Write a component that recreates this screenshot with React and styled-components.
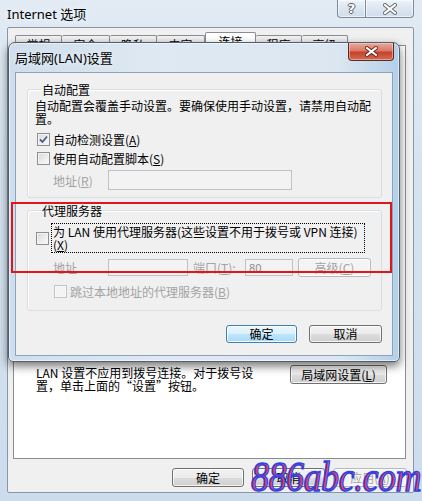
import React from "react"
import styled, { createGlobalStyle } from "styled-components"

const GlobalStyle = createGlobalStyle`
  html, body {
    margin: 0;
    padding: 0;
  }
  body {
    width: 422px;
    height: 501px;
    overflow: hidden;
    font-family: "Noto Sans CJK SC", "Noto Sans", sans-serif;
    font-size: 12px;
    color: #000;
  }
`

const Screen = styled.div`
  position: relative;
  width: 422px;
  height: 501px;
  overflow: hidden;
`

/* ---------- outer "Internet 选项" window ---------- */

const Window = styled.div`
  box-sizing: border-box;
  height: 501px;
  padding: 0 8px 8px 7px;
  display: flex;
  flex-direction: column;
  background: linear-gradient(180deg, #e2ebf4 0%, #d6e3ef 35%, #cddced 100%);
`

const TitleBar = styled.div`
  height: 27px;
  display: flex;
  justify-content: space-between;
  align-items: flex-start;
  flex-shrink: 0;
`

const WindowTitle = styled.div`
  padding-top: 6px;
  font-family: "Noto Sans", "Noto Sans CJK SC", sans-serif;
  font-size: 13px;
  line-height: 16px;
  text-shadow: 0 0 6px rgba(255, 255, 255, 0.9);
`

const Captions = styled.div`
  display: flex;
`

const CaptionButton = styled.div`
  box-sizing: border-box;
  width: ${(p) => p.$w}px;
  height: 18px;
  display: flex;
  align-items: center;
  justify-content: center;
  border: 1px solid #7d8a99;
  border-top: none;
  background: linear-gradient(180deg, #edf3f9 0%, #dbe6f1 50%, #cfdcea 100%);
  box-shadow: inset 0 0 0 1px rgba(255, 255, 255, 0.6);
  &:first-child {
    border-radius: 0 0 0 4px;
    border-right: none;
  }
  &:last-child {
    border-radius: 0 0 4px 0;
  }
`

const HelpGlyph = styled.span`
  font-family: "DejaVu Sans", sans-serif;
  font-weight: bold;
  font-size: 13px;
  line-height: 1;
  color: #fff;
  text-shadow: 1px 0 #5c5c5c, -1px 0 #5c5c5c, 0 1px #5c5c5c, 0 -1px #5c5c5c;
`

const Client = styled.div`
  flex: 1;
  display: flex;
  flex-direction: column;
  background: #f0f0f0;
  border: 1px solid #8797a8;
  border-radius: 2px;
  padding: 5px 7px 5px 5px;
`

const TabRow = styled.div`
  display: flex;
  align-items: flex-end;
  height: 12px;
  padding-left: 2px;
  position: relative;
  z-index: 1;
`

const Tab = styled.div`
  box-sizing: border-box;
  width: ${(p) => p.$w}px;
  height: ${(p) => (p.$active ? 14 : 10)}px;
  margin-bottom: ${(p) => (p.$active ? -1 : 0)}px;
  border: 1px solid #898c95;
  border-bottom: none;
  border-left-width: ${(p) => (p.$first || p.$active ? 1 : 0)}px;
  border-radius: 2px 2px 0 0;
  background: ${(p) =>
    p.$active ? "#fff" : "linear-gradient(180deg, #f3f3f3, #e3e3e3)"};
  text-align: center;
  padding-top: 2px;
  font-size: 12px;
  line-height: 13px;
  overflow: hidden;
`

const Panel = styled.div`
  flex: 1;
  display: flex;
  flex-direction: column;
  justify-content: flex-end;
  background: #fff;
  border: 1px solid #898c95;
  padding: 0 18px 66px 22px;
`

const LanRow = styled.div`
  display: flex;
  justify-content: space-between;
  align-items: flex-start;
`

const LanNote = styled.div`
  margin-top: 2px;
  line-height: 12.5px;
`

const ButtonRow = styled.div`
  display: flex;
  justify-content: flex-end;
  gap: ${(p) => p.$gap || 8}px;
  margin-right: ${(p) => p.$right || 0}px;
  flex-shrink: 0;
`

const DialogButtons = styled(ButtonRow)`
  margin-top: auto;
`

const OuterButtons = styled(ButtonRow)`
  padding-top: 9px;
`

const Button = styled.button`
  box-sizing: border-box;
  width: ${(p) => p.$w}px;
  height: ${(p) => p.$h || 19}px;
  padding: 0;
  margin: 0;
  font-family: "Noto Sans CJK SC", sans-serif;
  font-size: 12px;
  line-height: 1;
  color: ${(p) => (p.$disabled ? "#a3a3a3" : "#000")};
  border: 1px solid
    ${(p) => (p.$disabled ? "#b6babe" : p.$default ? "#3c7fb1" : "#707070")};
  border-radius: 3px;
  background: ${(p) =>
    p.$disabled
      ? "#f4f4f4"
      : p.$default
      ? "linear-gradient(180deg, #eaf6fd 0%, #d9f0fc 50%, #bee6fd 51%, #a7d9f5 100%)"
      : "linear-gradient(180deg, #f2f2f2 0%, #ebebeb 50%, #dddddd 51%, #cfcfcf 100%)"};
  box-shadow: inset 0 0 0 1px
    ${(p) => (p.$default ? "rgba(255,255,255,0.95)" : "rgba(255,255,255,0.75)")};
`

/* ---------- LAN settings dialog ---------- */

const Dialog = styled.div`
  position: absolute;
  left: 8px;
  top: 42px;
  width: 392px;
  height: 320px;
  box-sizing: border-box;
  z-index: 2;
  display: flex;
  flex-direction: column;
  padding: 0 6px 5px 6px;
  border: 1px solid #4f5f70;
  border-radius: 7px 7px 5px 5px;
  background: linear-gradient(90deg, #cfdeec 0%, #dfe9f3 40%, #dbe6f1 85%, #b3cfe9 100%);
  box-shadow: inset 0 0 0 1px rgba(255, 255, 255, 0.55), 0 4px 10px rgba(0, 0, 0, 0.55);
`

const DialogTitleBar = styled.div`
  height: 29px;
  display: flex;
  justify-content: space-between;
  align-items: flex-start;
  flex-shrink: 0;
`

const DialogTitle = styled.div`
  padding-top: 7px;
  font-family: "Noto Sans", "Noto Sans CJK SC", sans-serif;
  font-size: 13px;
  line-height: 16px;
  text-shadow: 0 0 6px rgba(255, 255, 255, 0.9);
`

const CloseButton = styled.div`
  box-sizing: border-box;
  width: 46px;
  height: 18px;
  margin-right: -1px;
  display: flex;
  align-items: center;
  justify-content: center;
  border: 1px solid #5b2a22;
  border-top: none;
  border-radius: 0 0 4px 4px;
  background: linear-gradient(180deg, #e9a99a 0%, #d87a68 45%, #c4432f 55%, #d36a4f 100%);
  box-shadow: inset 0 0 0 1px rgba(255, 220, 210, 0.5);
`

const DialogClient = styled.div`
  flex: 1;
  display: flex;
  flex-direction: column;
  background: #f0f0f0;
  border: 1px solid #8fa3b8;
  padding: 10px 10px 12px 11px;
`

const Group = styled.fieldset`
  margin: ${(p) => p.$top || 0}px 0 0 0;
  padding: 3px 8px ${(p) => p.$bottom || 7}px 7px;
  border: 1px solid #d5dfe5;
  border-radius: 3px;
  box-shadow: inset 1px 1px 0 #fff;
  min-width: 0;
`

const Legend = styled.legend`
  padding: 0 1px;
  margin-left: 6px;
  font-size: 12px;
  line-height: 13px;
`

const GroupPadded = styled(Group)`
  padding-top: 6px;
`

const Desc = styled.div`
  max-width: 340px;
  line-height: 13px;
`

const CheckRow = styled.div`
  display: flex;
  align-items: center;
  gap: 3px;
  height: 13px;
  line-height: 13px;
  margin-top: ${(p) => p.$top || 0}px;
  margin-left: ${(p) => p.$indent || 2}px;
  color: ${(p) => (p.$disabled ? "#a3a3a3" : "#000")};
`

const Box = styled.span`
  box-sizing: border-box;
  width: 13px;
  height: 13px;
  flex-shrink: 0;
  display: flex;
  align-items: center;
  justify-content: center;
  border: 1px solid ${(p) => (p.$disabled ? "#c4c4c4" : "#8e8f8f")};
  background: ${(p) =>
    p.$disabled
      ? "#f4f4f4"
      : "linear-gradient(135deg, #d6d6d6 0%, #e9e9e9 45%, #fbfbfb 100%)"};
  box-shadow: inset 0 0 0 1px ${(p) => (p.$disabled ? "#f7f7f7" : "#f4f4f4")};
`

const FieldRow = styled.div`
  display: flex;
  align-items: center;
  margin-top: ${(p) => p.$top || 0}px;
  margin-left: 18px;
`

const FieldLabel = styled.span`
  width: ${(p) => p.$w}px;
  margin-left: ${(p) => p.$left || 0}px;
  flex-shrink: 0;
  color: #a3a3a3;
  line-height: 13px;
`

const TextInput = styled.div`
  box-sizing: border-box;
  width: ${(p) => p.$w}px;
  height: ${(p) => p.$h || 17}px;
  flex-shrink: 0;
  border: 1px solid #bfc3c8;
  background: #f3f3f3;
  color: #8c8c8c;
  padding: 1px 3px;
  font-family: "Noto Sans", sans-serif;
  font-size: 11px;
  line-height: 13px;
`

const ProxyRow = styled.div`
  display: flex;
  align-items: flex-start;
  gap: 2px;
  margin-left: 1px;
`

const ProxyBox = styled(Box)`
  margin-top: 9px;
`

const FocusLabel = styled.div`
  box-sizing: border-box;
  width: 314px;
  padding: 1px 0 1px 1px;
  border: 1px dotted #000;
  line-height: 13px;
`

const SideButton = styled(Button)`
  margin-left: 5px;
`

/* ---------- overlays ---------- */

const Highlight = styled.div`
  position: absolute;
  left: 11px;
  top: 202px;
  width: 381px;
  height: 71px;
  box-sizing: border-box;
  border: 2px solid #e2141c;
  z-index: 3;
  pointer-events: none;
`

const Watermark = styled.div`
  position: absolute;
  left: 251px;
  top: 460px;
  z-index: 4;
  font-family: "Liberation Serif", serif;
  font-style: italic;
  font-size: 36px;
  line-height: 40px;
  letter-spacing: -0.5px;
  color: #f23848;
  -webkit-text-stroke: 1.3px #2b44e6;
  transform: scaleY(1.15);
  transform-origin: bottom left;
`

const Check = () => (
  <svg width="9" height="9" viewBox="0 0 9 9">
    <path d="M1 4.5 L3.5 7 L8 1.5" fill="none" stroke="#4a5f8f" strokeWidth="1.8" />
  </svg>
)

const CrossGlyph = ({ fill, edge, w = 12, h = 10 }) => (
  <svg width={w + 2} height={h + 2} viewBox={`-1 -1 ${w + 2} ${h + 2}`}>
    <path d={`M1 1 L${w - 1} ${h - 1} M${w - 1} 1 L1 ${h - 1}`} stroke={edge} strokeWidth="4" strokeLinecap="square" />
    <path d={`M1 1 L${w - 1} ${h - 1} M${w - 1} 1 L1 ${h - 1}`} stroke={fill} strokeWidth="2" strokeLinecap="square" />
  </svg>
)

const tabs = [
  { label: "常规", w: 47 },
  { label: "安全", w: 48 },
  { label: "隐私", w: 47 },
  { label: "内容", w: 48 },
  { label: "连接", w: 51, active: true },
  { label: "程序", w: 46 },
  { label: "高级", w: 46 },
]

const LanDialog = () => (
  <Dialog>
    <DialogTitleBar>
      <DialogTitle>局域网(LAN)设置</DialogTitle>
      <CloseButton>
        <CrossGlyph fill="#fff" edge="#6b2419" w={11} h={9} />
      </CloseButton>
    </DialogTitleBar>
    <DialogClient>
      <Group>
        <Legend>自动配置</Legend>
        <Desc>自动配置会覆盖手动设置。要确保使用手动设置，请禁用自动配置。</Desc>
        <CheckRow $top={8}>
          <Box>
            <Check />
          </Box>
          <span>
            自动检测设置(<u>A</u>)
          </span>
        </CheckRow>
        <CheckRow $top={6}>
          <Box />
          <span>
            使用自动配置脚本(<u>S</u>)
          </span>
        </CheckRow>
        <FieldRow $top={5}>
          <FieldLabel $w={55}>
            地址(<u>R</u>)
          </FieldLabel>
          <TextInput $w={184} $h={20} />
        </FieldRow>
      </Group>

      <GroupPadded $top={6} $bottom={12}>
        <Legend>代理服务器</Legend>
        <ProxyRow>
          <ProxyBox />
          <FocusLabel>
            为 LAN 使用代理服务器(这些设置不用于拨号或 VPN 连接)
            <br />
            (<u>X</u>)
          </FocusLabel>
        </ProxyRow>
        <FieldRow $top={5}>
          <FieldLabel $w={55}>地址</FieldLabel>
          <TextInput $w={80} />
          <FieldLabel $w={52} $left={5}>
            端口(<u>T</u>):
          </FieldLabel>
          <TextInput $w={48}>80</TextInput>
          <SideButton $w={73} $disabled>
            高级(<u>C</u>)
          </SideButton>
        </FieldRow>
        <CheckRow $top={8} $indent={19} $disabled>
          <Box $disabled />
          <span>
            跳过本地地址的代理服务器(<u>B</u>)
          </span>
        </CheckRow>
      </GroupPadded>

      <DialogButtons $gap={12}>
        <Button $w={71} $h={18} $default>
          确定
        </Button>
        <Button $w={73} $h={18}>
          取消
        </Button>
      </DialogButtons>
    </DialogClient>
  </Dialog>
)

const App = () => (
  <Screen>
    <GlobalStyle />
    <Window>
      <TitleBar>
        <WindowTitle>Internet 选项</WindowTitle>
        <Captions>
          <CaptionButton $w={28}>
            <HelpGlyph>?</HelpGlyph>
          </CaptionButton>
          <CaptionButton $w={49}>
            <CrossGlyph fill="#fff" edge="#6a6a6a" w={12} h={10} />
          </CaptionButton>
        </Captions>
      </TitleBar>
      <Client>
        <TabRow>
          {tabs.map((t, i) => (
            <Tab key={t.label} $w={t.w} $active={t.active} $first={i === 0}>
              {t.label}
            </Tab>
          ))}
        </TabRow>
        <Panel>
          <LanRow>
            <LanNote>
              LAN 设置不应用到拨号连接。对于拨号设
              <br />
              置，单击上面的“设置”按钮。
            </LanNote>
            <Button $w={97} $h={19}>
              局域网设置(<u>L</u>)
            </Button>
          </LanRow>
        </Panel>
        <OuterButtons $gap={8} $right={-1}>
          <Button $w={72}>确定</Button>
          <Button $w={73}>取消</Button>
          <Button $w={74} $disabled>
            应用(<u>A</u>)
          </Button>
        </OuterButtons>
      </Client>
    </Window>
    <LanDialog />
    <Highlight />
    <Watermark>886abc.com</Watermark>
  </Screen>
)

export default App
